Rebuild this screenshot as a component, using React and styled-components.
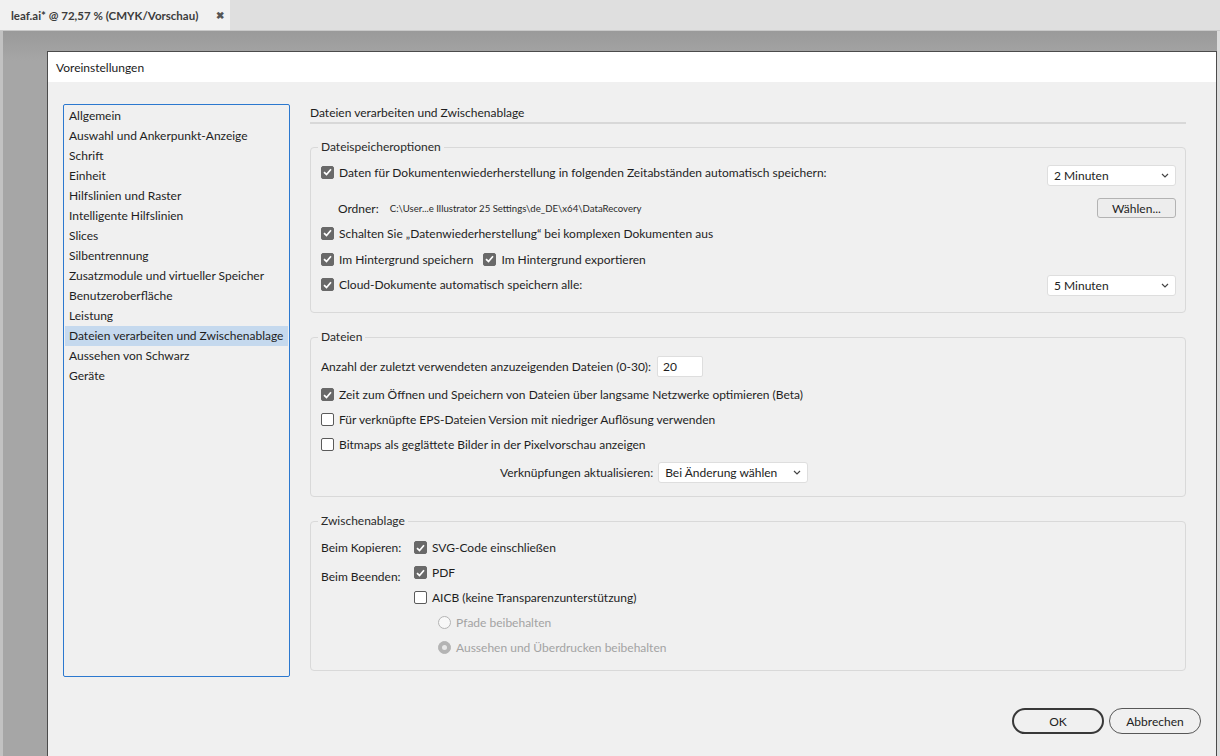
import React from "react"
import styled, { createGlobalStyle } from "styled-components"

const GlobalStyle = createGlobalStyle`
  html, body {
    margin: 0;
    padding: 0;
    background: #a4a4a4;
  }
  body {
    font-family: Lato, "Noto Sans", sans-serif;
    font-size: 12px;
    color: #1e1e1e;
  }
  * {
    box-sizing: border-box;
  }
`

const Screen = styled.div`
  width: 1220px;
  height: 756px;
  overflow: hidden;
  display: flex;
  flex-direction: column;
`

const TabBar = styled.div`
  height: 31px;
  background: #dfdfdf;
  border-bottom: 1px solid #c9c9c9;
  display: flex;
  align-items: stretch;
`

const Tab = styled.div`
  width: 230px;
  background: #f1f1f1;
  display: flex;
  align-items: center;
  justify-content: space-between;
  padding: 0 6px 0 11px;
  font-weight: 700;
  font-size: 11.5px;
  color: #3c3c3c;
`

const TabClose = styled.span`
  font-size: 10px;
  color: #555;
`

const Workspace = styled.div`
  flex: 1;
  display: flex;
  background: linear-gradient(#9a9a9a, #a6a6a6 30px);
  padding-top: 20px;
`

const LeftStrip = styled.div`
  width: 3px;
  margin-top: -20px;
  background: #c2c2c2;
`

const Dialog = styled.div`
  margin-left: 44px;
  width: 1170px;
  display: flex;
  flex-direction: column;
  background: #f0f0f0;
  border: 1px solid #4b4b4b;
  border-bottom: none;
`

const RightStrip = styled.div`
  width: 3px;
  margin-top: -20px;
  background: #dcdcdc;
`

const TitleBar = styled.div`
  height: 30px;
  background: #ffffff;
  display: flex;
  align-items: center;
  padding-left: 8px;
  font-size: 12px;
  color: #1a1a1a;
`

const Body = styled.div`
  display: flex;
  padding: 22px 15px 0 15px;
`

const Sidebar = styled.ul`
  list-style: none;
  margin: 0;
  padding: 1px;
  width: 227px;
  height: 573px;
  border: 1px solid #2b78cf;
  border-radius: 2px;
  background: #f0f0f0;
`

const SideItem = styled.li`
  height: 20px;
  line-height: 20px;
  padding-left: 4px;
  background: ${(p) => (p.$active ? "#c5d9ee" : "transparent")};
  white-space: nowrap;
`

const Content = styled.div`
  width: 876px;
  margin-left: 20px;
  display: flex;
  flex-direction: column;
`

const Heading = styled.div`
  height: 20px;
  line-height: 18px;
  border-bottom: 2px solid #d8d8d8;
  margin-bottom: 15px;
`

const Group = styled.fieldset`
  margin: 0 0 16px 0;
  padding: 0 9px 0 10px;
  border: 1px solid #d9d9d9;
  border-radius: 4px;
  min-width: 0;
  height: ${(p) => p.$h}px;
  display: flex;
  flex-direction: column;
`

const Legend = styled.legend`
  margin-left: -3px;
  padding: 0 3px;
  line-height: 16px;
  color: #2a2a2a;
`

const Row = styled.div`
  display: flex;
  align-items: center;
  height: ${(p) => p.$h || 25}px;
  margin-top: ${(p) => p.$mt || 0}px;
  padding-left: ${(p) => p.$indent || 0}px;
`

const Label = styled.label`
  display: flex;
  align-items: center;
  gap: 5px;
  color: ${(p) => (p.$disabled ? "#a3a3a3" : "#1e1e1e")};
  white-space: nowrap;
  margin-right: ${(p) => p.$mr || 0}px;
`

const Box = styled.span`
  width: 13px;
  height: 13px;
  border-radius: 2px;
  flex: none;
  display: flex;
  align-items: center;
  justify-content: center;
  background: ${(p) => (p.$checked ? "#696969" : "#ffffff")};
  border: 1px solid ${(p) => (p.$checked ? "#696969" : "#5a5a5a")};
`

const Radio = styled.span`
  width: 13px;
  height: 13px;
  border-radius: 50%;
  flex: none;
  display: flex;
  align-items: center;
  justify-content: center;
  background: ${(p) => (p.$checked ? "#b4b4b4" : "#f8f8f8")};
  border: 1px solid #b4b4b4;
`

const RadioDot = styled.span`
  width: 5px;
  height: 5px;
  border-radius: 50%;
  background: #e8e8e8;
`

const Spacer = styled.div`
  flex: 1;
`

const Select = styled.div`
  width: ${(p) => p.$w}px;
  height: 21px;
  background: #ffffff;
  border: 1px solid #dedede;
  border-radius: 3px;
  display: flex;
  align-items: center;
  justify-content: space-between;
  padding: 0 6px 0 6px;
  margin-top: ${(p) => p.$mt || 0}px;
  margin-left: ${(p) => p.$ml || 0}px;
  color: #222;
`

const Button = styled.div`
  width: 79px;
  height: 20px;
  border: 1px solid #b3b3b3;
  border-radius: 3px;
  background: #ededed;
  display: flex;
  align-items: center;
  justify-content: center;
`

const Folder = styled.span`
  margin-left: 17px;
  margin-right: 11px;
`

const Path = styled.span`
  font-size: 9.6px;
  color: #2a2a2a;
`

const NumberInput = styled.div`
  width: 46px;
  height: 21px;
  margin-left: 6px;
  background: #ffffff;
  border: 1px solid #dedede;
  border-radius: 2px;
  display: flex;
  align-items: center;
  padding-left: 5px;
`

const ClipGrid = styled.div`
  display: grid;
  grid-template-columns: 93px 1fr;
  grid-auto-rows: 25px;
  margin-top: 6px;
`

const ClipLabel = styled.div`
  display: flex;
  align-items: center;
  padding-top: ${(p) => p.$pt || 0}px;
`

const Footer = styled.div`
  display: flex;
  justify-content: flex-end;
  gap: 5px;
  padding: 21px 15px 0 0;
`

const PillButton = styled.div`
  width: 92px;
  height: 26px;
  border-radius: 13px;
  border: ${(p) => (p.$primary ? "2px solid #383838" : "1px solid #575757")};
  display: flex;
  align-items: center;
  justify-content: center;
  color: #222;
`

const Check = () => (
  <svg width="9" height="8" viewBox="0 0 9 8">
    <path d="M1 4.2 L3.5 6.5 L8 1.2" fill="none" stroke="#fff" strokeWidth="1.7" />
  </svg>
)

const Chevron = () => (
  <svg width="8" height="5" viewBox="0 0 8 5">
    <path d="M1 1 L4 4 L7 1" fill="none" stroke="#444" strokeWidth="1.2" />
  </svg>
)

const Checkbox = ({ checked, children, mr }) => (
  <Label $mr={mr}>
    <Box $checked={checked}>{checked && <Check />}</Box>
    {children}
  </Label>
)

const RadioOption = ({ checked, children }) => (
  <Label $disabled>
    <Radio $checked={checked}>{checked && <RadioDot />}</Radio>
    {children}
  </Label>
)

const sections = [
  "Allgemein",
  "Auswahl und Ankerpunkt-Anzeige",
  "Schrift",
  "Einheit",
  "Hilfslinien und Raster",
  "Intelligente Hilfslinien",
  "Slices",
  "Silbentrennung",
  "Zusatzmodule und virtueller Speicher",
  "Benutzeroberfläche",
  "Leistung",
  "Dateien verarbeiten und Zwischenablage",
  "Aussehen von Schwarz",
  "Geräte",
]

export default function App() {
  return (
    <Screen>
      <GlobalStyle />
      <TabBar>
        <Tab>
          <span>leaf.ai* @ 72,57 % (CMYK/Vorschau)</span>
          <TabClose>✖</TabClose>
        </Tab>
      </TabBar>
      <Workspace>
        <LeftStrip />
        <Dialog>
          <TitleBar>Voreinstellungen</TitleBar>
          <Body>
            <Sidebar>
              {sections.map((s, i) => (
                <SideItem key={s} $active={i === 11}>
                  {s}
                </SideItem>
              ))}
            </Sidebar>
            <Content>
              <Heading>Dateien verarbeiten und Zwischenablage</Heading>

              <Group $h={174}>
                <Legend>Dateispeicheroptionen</Legend>
                <Row $h={26} $mt={4}>
                  <Checkbox checked>
                    Daten für Dokumentenwiederherstellung in folgenden Zeitabständen automatisch speichern:
                  </Checkbox>
                  <Spacer />
                  <Select $w={129} $mt={7}>
                    2 Minuten <Chevron />
                  </Select>
                </Row>
                <Row $h={24} $mt={11}>
                  <Folder>Ordner:</Folder>
                  <Path>C:\User...e Illustrator 25 Settings\de_DE\x64\DataRecovery</Path>
                  <Spacer />
                  <Button>Wählen...</Button>
                </Row>
                <Row $h={26}>
                  <Checkbox checked>Schalten Sie „Datenwiederherstellung“ bei komplexen Dokumenten aus</Checkbox>
                </Row>
                <Row $h={26}>
                  <Checkbox checked mr={10}>
                    Im Hintergrund speichern
                  </Checkbox>
                  <Checkbox checked>Im Hintergrund exportieren</Checkbox>
                </Row>
                <Row $h={25}>
                  <Checkbox checked>Cloud-Dokumente automatisch speichern alle:</Checkbox>
                  <Spacer />
                  <Select $w={129} $mt={2}>
                    5 Minuten <Chevron />
                  </Select>
                </Row>
              </Group>

              <Group $h={168}>
                <Legend>Dateien</Legend>
                <Row $h={26} $mt={8}>
                  Anzahl der zuletzt verwendeten anzuzeigenden Dateien (0-30):
                  <NumberInput>20</NumberInput>
                </Row>
                <Row $mt={3}>
                  <Checkbox checked>
                    Zeit zum Öffnen und Speichern von Dateien über langsame Netzwerke optimieren (Beta)
                  </Checkbox>
                </Row>
                <Row>
                  <Checkbox>Für verknüpfte EPS-Dateien Version mit niedriger Auflösung verwenden</Checkbox>
                </Row>
                <Row>
                  <Checkbox>Bitmaps als geglättete Bilder in der Pixelvorschau anzeigen</Checkbox>
                </Row>
                <Row $mt={3} $indent={179}>
                  Verknüpfungen aktualisieren:
                  <Select $w={150} $ml={5}>
                    Bei Änderung wählen <Chevron />
                  </Select>
                </Row>
              </Group>

              <Group $h={158}>
                <Legend>Zwischenablage</Legend>
                <ClipGrid>
                  <ClipLabel>Beim Kopieren:</ClipLabel>
                  <Row>
                    <Checkbox checked>SVG-Code einschließen</Checkbox>
                  </Row>
                  <ClipLabel $pt={8}>Beim Beenden:</ClipLabel>
                  <Row>
                    <Checkbox checked>PDF</Checkbox>
                  </Row>
                  <div />
                  <Row>
                    <Checkbox>AICB (keine Transparenzunterstützung)</Checkbox>
                  </Row>
                  <div />
                  <Row $indent={24}>
                    <RadioOption>Pfade beibehalten</RadioOption>
                  </Row>
                  <div />
                  <Row $indent={24}>
                    <RadioOption checked>Aussehen und Überdrucken beibehalten</RadioOption>
                  </Row>
                </ClipGrid>
              </Group>
            </Content>
          </Body>
          <Footer>
            <PillButton $primary>OK</PillButton>
            <PillButton>Abbrechen</PillButton>
          </Footer>
        </Dialog>
        <RightStrip />
      </Workspace>
    </Screen>
  )
}
